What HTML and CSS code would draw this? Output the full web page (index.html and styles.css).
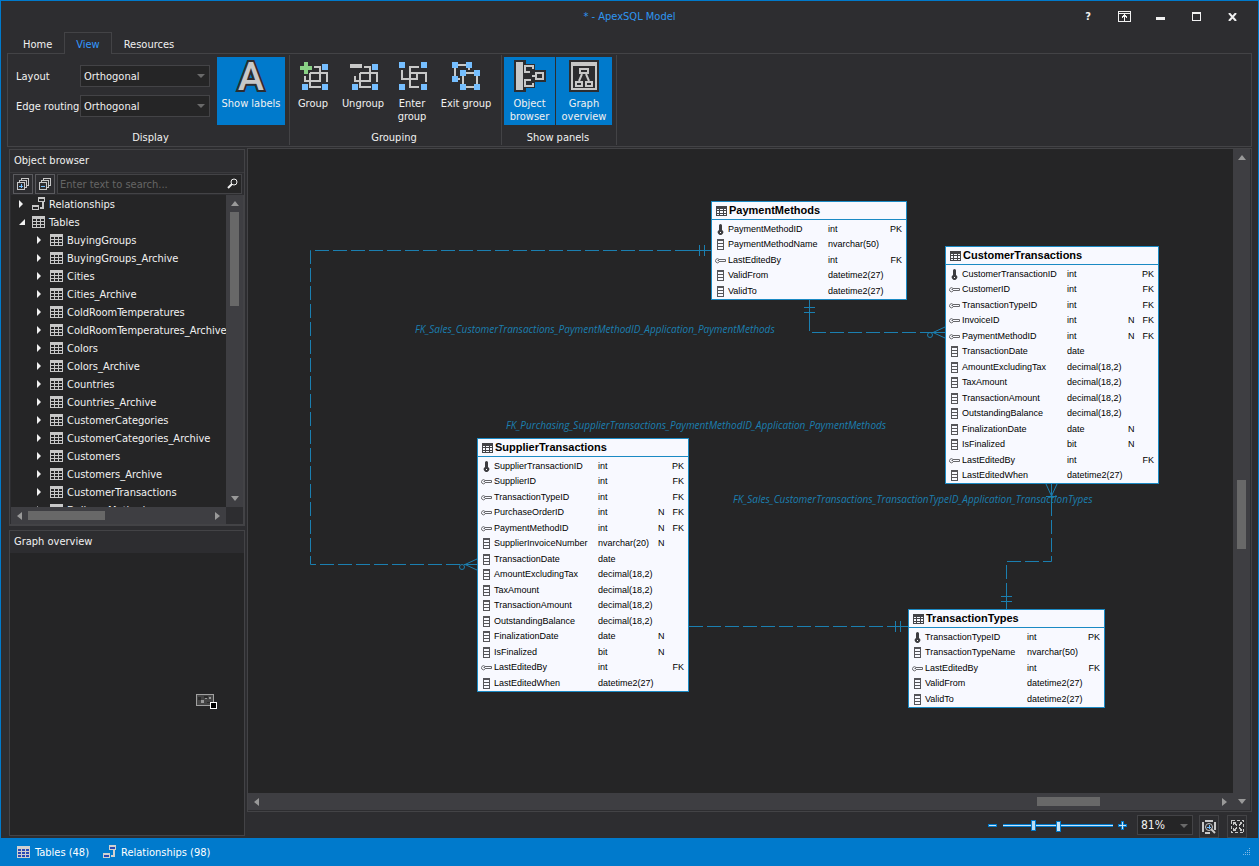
FILE: index.html
```
<!DOCTYPE html>
<html lang="en">
<head>
    <meta charset="UTF-8">
    <meta name="viewport" content="width=device-width, initial-scale=1.0">
    <title>* - ApexSQL Model</title>
    <link rel="stylesheet" href="styles.css">
</head>
<body>
    <!-- shared icons -->
    <svg class="sprite" aria-hidden="true">
        <symbol id="i-table" viewBox="0 0 13 12">
            <path fill="currentColor" fill-rule="evenodd" d="M0 0H13V12H0zM1 3V5H4V3zM5 3V5H8V3zM9 3V5H12V3zM1 6V8H4V6zM5 6V8H8V6zM9 6V8H12V6zM1 9V11H4V9zM5 9V11H8V9zM9 9V11H12V9z"/>
        </symbol>
        <symbol id="i-rel" viewBox="0 0 13 14">
            <path fill="currentColor" fill-rule="evenodd" d="M6 0H13V5H6zM7 2V4H12V2zM0 8H7V13H0zM1 10V12H6V10zM10 5H12V12H8V10H10z"/>
        </symbol>
        <symbol id="i-col" viewBox="0 0 11 11">
            <path fill="#55555a" fill-rule="evenodd" d="M2 0H9V11H2zM3 2V4H8V2zM3 5V7H8V5zM3 8V10H8V8z"/>
        </symbol>
        <symbol id="i-pk" viewBox="0 0 11 11">
            <path class="smooth" fill="#3c3c40" d="M4 1.500A1.500 1.500 0 0 1 7 1.500V6A2.700 2.700 0 1 1 4 6z"/>
            <path fill="#fff" d="M5 8H6V9H5z"/>
        </symbol>
        <symbol id="i-fk" viewBox="0 0 11 11">
            <path class="smooth" fill="none" stroke="#66666a" d="M4 4.500A2 2 0 1 0 4 7M2.500 5.500H4M4 4.500H10.500V6.500H4"/>
        </symbol>
    </svg>

    <div class="window">
        <header class="titlebar">
            <h1>* - ApexSQL Model</h1>
            <div class="window-buttons">
                <button aria-label="Help">?</button>
                <button aria-label="Hide ribbon"><svg width="13" height="11"><path fill="none" stroke="#f1f1f1" d="M.5 .5H12.5V10.5H.5zM0 2.5H13M6.5 4V10M4 6.5L6.5 4L9 6.5"/></svg></button>
                <button aria-label="Minimize"><svg width="9" height="11"><path fill="#f1f1f1" d="M0 6H9V9H0z"/></svg></button>
                <button aria-label="Maximize"><svg width="9" height="9"><path fill="#f1f1f1" fill-rule="evenodd" d="M0 0H9V9H0zM1 2V8H8V2z"/></svg></button>
                <button aria-label="Close"><svg class="smooth" width="9" height="8"><path fill="none" stroke="#f1f1f1" stroke-width="2" d="M1 0L8 8M8 0L1 8"/></svg></button>
            </div>
        </header>

        <nav class="tabs">
            <button>Home</button>
            <button class="active">View</button>
            <button>Resources</button>
        </nav>

        <div class="ribbon">
            <section class="group group-display">
                <div class="group-body">
                    <div class="fields">
                        <label for="layout">Layout</label>
                        <span class="combo"><select id="layout"><option>Orthogonal</option></select></span>
                        <label for="routing">Edge routing</label>
                        <span class="combo"><select id="routing"><option>Orthogonal</option></select></span>
                    </div>
                    <button class="tool pressed tool-labels">
                        <svg class="letter-icon" width="32" height="32"><text class="letter" x="16" y="30">A</text></svg>
                        Show labels
                    </button>
                </div>
                <h2>Display</h2>
            </section>

            <section class="group group-grouping">
                <div class="group-body">
                    <button class="tool w46">
                        <svg width="32" height="32">
                            <path class="line" d="M17 7H23V21H8V16M13 13H30V22M13 13V27H24"/>
                            <path class="blue" d="M25 4h6v6h-6zM5 24h6v6h-6zM25 24h6v6h-6z"/>
                            <path fill="#89d185" d="M7 2H11V6H15V10H11V14H7V10H3V6H7z"/>
                        </svg>
                        Group
                    </button>
                    <button class="tool w54">
                        <svg width="32" height="32">
                            <path class="line" d="M17 7H23V21H8V16M13 13H30V22M13 13V27H24"/>
                            <path class="blue" d="M25 4h6v6h-6zM5 24h6v6h-6zM25 24h6v6h-6z"/>
                            <path fill="#c8c8c8" d="M3 4H15V8H3z"/>
                        </svg>
                        Ungroup
                    </button>
                    <button class="tool w44">
                        <svg width="32" height="32">
                            <path class="line" d="M6 10V19H21V13M23 7H14V27H23M14 13H30V22"/>
                            <path class="blue" d="M3 2h6v6h-6zM25 2h6v6h-6zM3 24h6v6h-6zM25 24h6v6h-6z"/>
                        </svg>
                        Enter<br>group
                    </button>
                    <button class="tool w64">
                        <svg width="32" height="32">
                            <path class="line" d="M5 5H19V10M5 5V19H10M13 13H27V27H13z"/>
                            <path class="blue" d="M2 2h6v6h-6zM16 2h6v6h-6zM2 16h6v6h-6zM10 10h6v6h-6zM24 10h6v6h-6zM10 24h6v6h-6zM24 24h6v6h-6z"/>
                        </svg>
                        Exit group
                    </button>
                </div>
                <h2>Grouping</h2>
            </section>

            <section class="group group-panels">
                <div class="group-body">
                    <button class="tool pressed w51">
                        <svg width="32" height="32">
                            <path fill="#2d2d30" d="M0 0H12V4H21V10H32V22H21V28H12V32H0z"/>
                            <path fill="#c8c8c8" d="M2 2H9V30H2z"/>
                            <path class="line" d="M19 9V6H11V12H16M22 13H29V19H22zM22 16H18M19 23V26H11V20H17"/>
                        </svg>
                        Object browser
                    </button>
                    <button class="tool pressed w56">
                        <svg width="32" height="32">
                            <path fill="#2d2d30" d="M1 0H31V32H1z"/>
                            <path fill="#c8c8c8" fill-rule="evenodd" d="M3 2H29V30H3zM5 6V28H27V6z"/>
                            <path class="line smooth" d="M12 9H20V13H12zM8 22H14V26H8zM18 22H24V26H18zM14 14L11 21M18 14L21 21"/>
                        </svg>
                        Graph overview
                    </button>
                </div>
                <h2>Show panels</h2>
            </section>
        </div>

        <div class="workspace">
            <aside class="sidebar">
                <section class="panel browser">
                    <h2>Object browser</h2>
                    <div class="search-row">
                        <button aria-label="Expand all"><svg width="12" height="12"><path fill="none" stroke="#c8c8c8" d="M.5 4.5H7.5V11.5H.5zM2.5 4V2.5H9.5V9.5H8M4.5 2V.5H11.5V7.5H10"/><path stroke="#75beff" d="M2 8H6M4 6V10"/></svg></button>
                        <button aria-label="Collapse all"><svg width="12" height="12"><path fill="none" stroke="#c8c8c8" d="M.5 4.5H7.5V11.5H.5zM2.5 4V2.5H9.5V9.5H8M4.5 2V.5H11.5V7.5H10"/><path stroke="#75beff" d="M2 8H6"/></svg></button>
                        <div class="search">
                            <input type="text" aria-label="Search" placeholder="Enter text to search...">
                            <svg class="smooth" width="12" height="12"><circle cx="7" cy="4" r="3" fill="none" stroke="#f1f1f1"/><path stroke="#f1f1f1" stroke-width="2" d="M5 6L1 10"/></svg>
                        </div>
                    </div>
                    <div class="tree-area">
                        <ul class="tree">
                            <li><i class="closed"></i><svg class="rel"><use href="#i-rel"/></svg>Relationships</li>
                            <li><i class="open"></i><svg><use href="#i-table"/></svg>Tables</li>
                            <li class="sub"><i class="closed"></i><svg><use href="#i-table"/></svg>BuyingGroups</li>
                            <li class="sub"><i class="closed"></i><svg><use href="#i-table"/></svg>BuyingGroups_Archive</li>
                            <li class="sub"><i class="closed"></i><svg><use href="#i-table"/></svg>Cities</li>
                            <li class="sub"><i class="closed"></i><svg><use href="#i-table"/></svg>Cities_Archive</li>
                            <li class="sub"><i class="closed"></i><svg><use href="#i-table"/></svg>ColdRoomTemperatures</li>
                            <li class="sub"><i class="closed"></i><svg><use href="#i-table"/></svg>ColdRoomTemperatures_Archive</li>
                            <li class="sub"><i class="closed"></i><svg><use href="#i-table"/></svg>Colors</li>
                            <li class="sub"><i class="closed"></i><svg><use href="#i-table"/></svg>Colors_Archive</li>
                            <li class="sub"><i class="closed"></i><svg><use href="#i-table"/></svg>Countries</li>
                            <li class="sub"><i class="closed"></i><svg><use href="#i-table"/></svg>Countries_Archive</li>
                            <li class="sub"><i class="closed"></i><svg><use href="#i-table"/></svg>CustomerCategories</li>
                            <li class="sub"><i class="closed"></i><svg><use href="#i-table"/></svg>CustomerCategories_Archive</li>
                            <li class="sub"><i class="closed"></i><svg><use href="#i-table"/></svg>Customers</li>
                            <li class="sub"><i class="closed"></i><svg><use href="#i-table"/></svg>Customers_Archive</li>
                            <li class="sub"><i class="closed"></i><svg><use href="#i-table"/></svg>CustomerTransactions</li>
                            <li class="sub"><i class="closed"></i><svg><use href="#i-table"/></svg>DeliveryMethods</li>
                        </ul>
                        <div class="bar-v tree-v"><b class="up"></b><span></span><b class="down"></b></div>
                        <div class="bar-h tree-h"><b class="left"></b><span></span><b class="right"></b></div>
                    </div>
                </section>

                <section class="panel overview">
                    <h2>Graph overview</h2>
                    <div class="overview-map">
                        <svg class="mini" width="21" height="15">
                            <path fill="#444" stroke="#a0a0a0" d="M.5 .5H17.5V11.5H.5z"/>
                            <path fill="#2a2a2a" d="M2 3H5V6H2zM8 2H12V4H8zM11 8H15V9H11z"/>
                            <path fill="#999" d="M5 6H8V9H5zM13 3H15V5H13zM9 4H11V5H9z"/>
                            <path fill="#000" stroke="#fff" d="M14.5 8.5H20.5V14.5H14.5z"/>
                        </svg>
                    </div>
                </section>
            </aside>

            <main class="editor">
                <div class="diagram-box">
                    <div class="diagram">
                        <svg class="edges">
                            <g class="dashed">
                                <path d="M441 101.500H62.500V415.500H217"/>
                                <path d="M561.500 168V183.500H685"/>
                                <path d="M803.500 353V412.500H758.500V443"/>
                                <path d="M441 477.500H642"/>
                            </g>
                            <g>
                                <path d="M463 101.500H441M451.500 96V107M456.500 96V107"/>
                                <path d="M217 415.500H229M217 415.500L229 410M217 415.500L229 421"/>
                                <circle cx="214" cy="418" r="2.500"/>
                                <path d="M561.500 151V168M556 158.500H567M556 163.500H567"/>
                                <path d="M685 183.500H697M685 183.500L697 178M685 183.500L697 189"/>
                                <circle cx="682" cy="186" r="2.500"/>
                                <path d="M803.500 335V353M798 335L803.500 347L809 335M798 347.500H809"/>
                                <path d="M758.500 443V460M753 447.500H764M753 452.500H764"/>
                                <path d="M642 477.500H660M647.500 472V483M652.500 472V483"/>
                            </g>
                            <text x="167" y="184">FK_Sales_CustomerTransactions_PaymentMethodID_Application_PaymentMethods</text>
                            <text x="258" y="280">FK_Purchasing_SupplierTransactions_PaymentMethodID_Application_PaymentMethods</text>
                            <text x="485" y="354">FK_Sales_CustomerTransactions_TransactionTypeID_Application_TransactionTypes</text>
                        </svg>

                        <article class="node node-payment">
                            <h3><svg><use href="#i-table"/></svg>PaymentMethods</h3>
                            <table>
                                <tr><td><svg><use href="#i-pk"/></svg></td><td>PaymentMethodID</td><td>int</td><td></td><td>PK</td></tr>
                                <tr><td><svg><use href="#i-col"/></svg></td><td>PaymentMethodName</td><td>nvarchar(50)</td><td></td><td></td></tr>
                                <tr><td><svg><use href="#i-fk"/></svg></td><td>LastEditedBy</td><td>int</td><td></td><td>FK</td></tr>
                                <tr><td><svg><use href="#i-col"/></svg></td><td>ValidFrom</td><td>datetime2(27)</td><td></td><td></td></tr>
                                <tr><td><svg><use href="#i-col"/></svg></td><td>ValidTo</td><td>datetime2(27)</td><td></td><td></td></tr>
                            </table>
                        </article>

                        <article class="node node-customer">
                            <h3><svg><use href="#i-table"/></svg>CustomerTransactions</h3>
                            <table>
                                <tr><td><svg><use href="#i-pk"/></svg></td><td>CustomerTransactionID</td><td>int</td><td></td><td>PK</td></tr>
                                <tr><td><svg><use href="#i-fk"/></svg></td><td>CustomerID</td><td>int</td><td></td><td>FK</td></tr>
                                <tr><td><svg><use href="#i-fk"/></svg></td><td>TransactionTypeID</td><td>int</td><td></td><td>FK</td></tr>
                                <tr><td><svg><use href="#i-fk"/></svg></td><td>InvoiceID</td><td>int</td><td>N</td><td>FK</td></tr>
                                <tr><td><svg><use href="#i-fk"/></svg></td><td>PaymentMethodID</td><td>int</td><td>N</td><td>FK</td></tr>
                                <tr><td><svg><use href="#i-col"/></svg></td><td>TransactionDate</td><td>date</td><td></td><td></td></tr>
                                <tr><td><svg><use href="#i-col"/></svg></td><td>AmountExcludingTax</td><td>decimal(18,2)</td><td></td><td></td></tr>
                                <tr><td><svg><use href="#i-col"/></svg></td><td>TaxAmount</td><td>decimal(18,2)</td><td></td><td></td></tr>
                                <tr><td><svg><use href="#i-col"/></svg></td><td>TransactionAmount</td><td>decimal(18,2)</td><td></td><td></td></tr>
                                <tr><td><svg><use href="#i-col"/></svg></td><td>OutstandingBalance</td><td>decimal(18,2)</td><td></td><td></td></tr>
                                <tr><td><svg><use href="#i-col"/></svg></td><td>FinalizationDate</td><td>date</td><td>N</td><td></td></tr>
                                <tr><td><svg><use href="#i-col"/></svg></td><td>IsFinalized</td><td>bit</td><td>N</td><td></td></tr>
                                <tr><td><svg><use href="#i-fk"/></svg></td><td>LastEditedBy</td><td>int</td><td></td><td>FK</td></tr>
                                <tr><td><svg><use href="#i-col"/></svg></td><td>LastEditedWhen</td><td>datetime2(27)</td><td></td><td></td></tr>
                            </table>
                        </article>

                        <article class="node node-supplier">
                            <h3><svg><use href="#i-table"/></svg>SupplierTransactions</h3>
                            <table>
                                <tr><td><svg><use href="#i-pk"/></svg></td><td>SupplierTransactionID</td><td>int</td><td></td><td>PK</td></tr>
                                <tr><td><svg><use href="#i-fk"/></svg></td><td>SupplierID</td><td>int</td><td></td><td>FK</td></tr>
                                <tr><td><svg><use href="#i-fk"/></svg></td><td>TransactionTypeID</td><td>int</td><td></td><td>FK</td></tr>
                                <tr><td><svg><use href="#i-fk"/></svg></td><td>PurchaseOrderID</td><td>int</td><td>N</td><td>FK</td></tr>
                                <tr><td><svg><use href="#i-fk"/></svg></td><td>PaymentMethodID</td><td>int</td><td>N</td><td>FK</td></tr>
                                <tr><td><svg><use href="#i-col"/></svg></td><td>SupplierInvoiceNumber</td><td>nvarchar(20)</td><td>N</td><td></td></tr>
                                <tr><td><svg><use href="#i-col"/></svg></td><td>TransactionDate</td><td>date</td><td></td><td></td></tr>
                                <tr><td><svg><use href="#i-col"/></svg></td><td>AmountExcludingTax</td><td>decimal(18,2)</td><td></td><td></td></tr>
                                <tr><td><svg><use href="#i-col"/></svg></td><td>TaxAmount</td><td>decimal(18,2)</td><td></td><td></td></tr>
                                <tr><td><svg><use href="#i-col"/></svg></td><td>TransactionAmount</td><td>decimal(18,2)</td><td></td><td></td></tr>
                                <tr><td><svg><use href="#i-col"/></svg></td><td>OutstandingBalance</td><td>decimal(18,2)</td><td></td><td></td></tr>
                                <tr><td><svg><use href="#i-col"/></svg></td><td>FinalizationDate</td><td>date</td><td>N</td><td></td></tr>
                                <tr><td><svg><use href="#i-col"/></svg></td><td>IsFinalized</td><td>bit</td><td>N</td><td></td></tr>
                                <tr><td><svg><use href="#i-fk"/></svg></td><td>LastEditedBy</td><td>int</td><td></td><td>FK</td></tr>
                                <tr><td><svg><use href="#i-col"/></svg></td><td>LastEditedWhen</td><td>datetime2(27)</td><td></td><td></td></tr>
                            </table>
                        </article>

                        <article class="node node-types">
                            <h3><svg><use href="#i-table"/></svg>TransactionTypes</h3>
                            <table>
                                <tr><td><svg><use href="#i-pk"/></svg></td><td>TransactionTypeID</td><td>int</td><td></td><td>PK</td></tr>
                                <tr><td><svg><use href="#i-col"/></svg></td><td>TransactionTypeName</td><td>nvarchar(50)</td><td></td><td></td></tr>
                                <tr><td><svg><use href="#i-fk"/></svg></td><td>LastEditedBy</td><td>int</td><td></td><td>FK</td></tr>
                                <tr><td><svg><use href="#i-col"/></svg></td><td>ValidFrom</td><td>datetime2(27)</td><td></td><td></td></tr>
                                <tr><td><svg><use href="#i-col"/></svg></td><td>ValidTo</td><td>datetime2(27)</td><td></td><td></td></tr>
                            </table>
                        </article>
                    </div>
                    <div class="bar-v diagram-v"><b class="up"></b><span></span><b class="down"></b></div>
                    <div class="bar-h diagram-h"><b class="left"></b><span></span><b class="right"></b></div>
                </div>

                <div class="zoom-row">
                    <button class="step" aria-label="Zoom out"><svg width="9" height="9"><path fill="#007acc" d="M0 3H9V6H0z"/><path fill="#c8e4f8" d="M1 4H8V5H1z"/></svg></button>
                    <div class="slider"><input type="range" aria-label="Zoom" min="0" max="100" value="27"></div>
                    <button class="step" aria-label="Zoom in"><svg width="9" height="9"><path fill="#007acc" d="M3 0H6V3H9V6H6V9H3V6H0V3H3z"/><path fill="#c8e4f8" d="M4 1H5V4H8V5H5V8H4V5H1V4H4z"/></svg></button>
                    <span class="combo zoom-combo"><select aria-label="Zoom level"><option>81%</option></select></span>
                    <button class="square" aria-label="Zoom to selection"><svg width="14" height="14"><path fill="none" stroke="#c8c8c8" stroke-width="2" d="M1 2V12M3 1H11M13 2V10M3 13H8"/><circle class="smooth" cx="7" cy="7" r="3.500" fill="#2d2d30" stroke="#c8c8c8"/><path stroke="#75beff" d="M5 7.500H9M7.500 5V9"/><path class="smooth" stroke="#c8c8c8" stroke-width="2" d="M9 9L13 13"/></svg></button>
                    <button class="square" aria-label="Fit content"><svg width="13" height="13"><path fill="none" stroke="#c8c8c8" stroke-dasharray="3 2" d="M.5 .5H12.500V12.500H.5z"/><path fill="#c8c8c8" d="M2 2H5L4 3L6 5L5 6L3 4L2 5zM11 2V5L10 4L8 6L7 5L9 3L8 2zM2 11V8L3 9L5 7L6 8L4 10L5 11zM11 11H8L9 10L7 8L8 7L10 9L11 8z"/></svg></button>
                </div>
            </main>
        </div>

        <footer class="statusbar">
            <span class="stat"><svg width="13" height="12"><path fill="#2a4bb5" d="M1 3H12V11H1z"/><use href="#i-table"/></svg>Tables (48)</span>
            <span class="stat"><svg width="13" height="14"><path fill="#2a4bb5" d="M7 2H12V4H7zM1 10H6V12H1z"/><use href="#i-rel"/></svg>Relationships (98)</span>
            <svg class="grip" width="8" height="8"><path fill="#7fb8e6" d="M6 0h1v1h-1zM4 2h1v1h-1zM6 2h1v1h-1zM2 4h1v1h-1zM4 4h1v1h-1zM6 4h1v1h-1zM0 6h1v1h-1zM2 6h1v1h-1zM4 6h1v1h-1zM6 6h1v1h-1z"/></svg>
        </footer>
    </div>
</body>
</html>
```

FILE: styles.css
```
* {
    box-sizing: border-box;
}

body {
    margin: 0;
    background: #2d2d30;
    color: #f1f1f1;
    font-family: Tahoma, 'DejaVu Sans Condensed', 'Noto Sans', sans-serif;
    font-size: 11px;
    line-height: 13px;
}

h1, h2, h3, ul {
    margin: 0;
    padding: 0;
    font-size: 11px;
    font-weight: normal;
}

button, select, input {
    margin: 0;
    padding: 0;
    border: none;
    border-radius: 0;
    background: none;
    color: inherit;
    font: inherit;
}

svg {
    display: block;
    flex: none;
    shape-rendering: crispEdges;
}

.smooth {
    shape-rendering: auto;
}

.sprite {
    display: none;
}

.window {
    display: flex;
    flex-direction: column;
    height: 100vh;
    border: 1px solid #007acc;
    border-bottom: none;
}

/* title bar */
.titlebar {
    display: grid;
    grid-template-columns: 1fr auto 1fr;
    align-items: center;
    height: 31px;
    padding: 0 8px;
}

.titlebar h1 {
    grid-column: 2;
    color: #2f96f0;
}

.window-buttons {
    display: flex;
    justify-content: flex-end;
}

.window-buttons button {
    display: flex;
    justify-content: center;
    align-items: center;
    width: 36px;
    height: 24px;
    font-weight: bold;
}

/* ribbon */
.tabs {
    display: flex;
    height: 22px;
    padding-left: 10px;
    margin-bottom: -1px;
    position: relative;
    z-index: 1;
}

.tabs button {
    padding: 2px 11px 0;
    border: 1px solid transparent;
    border-bottom: none;
}

.tabs .active {
    color: #3399ff;
    border-color: #434346;
    background: #2d2d30;
}

.ribbon {
    display: flex;
    height: 94px;
    margin: 0 6px;
    border: 1px solid #434346;
}

.group {
    display: flex;
    flex-direction: column;
    margin: 1px 0;
    padding: 2px 3px 0 0;
    border-right: 1px solid #434346;
}

.group-body {
    display: flex;
    height: 68px;
}

.group h2 {
    padding-top: 6px;
    text-align: center;
}

.group-display {
    padding: 2px 4px 0 8px;
}

.group-panels {
    padding: 2px 4px 0 2px;
}

.group-panels .group-body {
    gap: 1px;
}

.fields {
    display: grid;
    grid-template-columns: 64px 130px;
    grid-auto-rows: 22px;
    row-gap: 8px;
    align-items: center;
    padding-top: 8px;
    margin-right: 7px;
    white-space: nowrap;
}

.combo {
    display: block;
    position: relative;
    height: 22px;
    border: 1px solid #434346;
    background: #252526;
}

.combo select {
    width: 100%;
    height: 100%;
    padding: 0 3px;
    appearance: none;
    outline: none;
}

.combo::after {
    content: '';
    position: absolute;
    right: 4px;
    top: 8px;
    border: 4px solid transparent;
    border-top-color: #6a6a6a;
    border-bottom: none;
    pointer-events: none;
}

.tool {
    display: flex;
    flex-direction: column;
    align-items: center;
    gap: 5px;
    padding-top: 3px;
    text-align: center;
}

.pressed {
    background: #007acc;
}

.tool-labels { width: 68px; }
.w44 { width: 44px; }
.w46 { width: 46px; }
.w51 { width: 51px; }
.w54 { width: 54px; }
.w56 { width: 56px; }
.w64 { width: 64px; }

.letter-icon {
    overflow: visible;
}

.letter {
    font: 500 39px Roboto, sans-serif;
    text-anchor: middle;
    fill: #c8c8c8;
    stroke: #2d2d30;
    stroke-width: 4px;
    paint-order: stroke;
}

.line {
    fill: none;
    stroke: #c8c8c8;
    stroke-width: 2;
}

.blue {
    fill: #75beff;
}

/* workspace */
.workspace {
    display: flex;
    flex: 1;
    min-height: 0;
    gap: 2px;
    padding: 1px 6px 0 8px;
}

.sidebar {
    display: flex;
    flex-direction: column;
    gap: 4px;
    width: 236px;
    padding: 1px 0 2px;
}

.panel {
    display: flex;
    flex-direction: column;
    border: 1px solid #434346;
}

.panel h2 {
    padding: 4px 4px 5px;
}

.browser {
    height: 377px;
}

.overview {
    flex: 1;
}

.overview-map {
    position: relative;
    flex: 1;
    background: #252526;
}

.mini {
    position: absolute;
    left: 186px;
    top: 141px;
}

.search-row {
    display: flex;
    gap: 2px;
    padding: 1px 2px 1px 3px;
    border-top: 1px solid #3a3a3d;
    height: 23px;
}

.search-row button {
    display: flex;
    justify-content: center;
    align-items: center;
    width: 20px;
    border: 1px solid #5a5a5e;
}

.search {
    display: flex;
    flex: 1;
    align-items: center;
    padding-right: 2px;
    border: 1px solid #434346;
    background: #252526;
}

.search input {
    flex: 1;
    min-width: 0;
    padding-left: 2px;
    outline: none;
}

.search input::placeholder {
    color: #656565;
}

.tree-area {
    display: grid;
    grid-template: 1fr 17px / 1fr 17px;
    flex: 1;
    min-height: 0;
    padding-left: 1px;
    border: solid #434346;
    border-width: 0 1px 1px 0;
}

.tree {
    min-height: 0;
    overflow: hidden;
    background: #252526;
    list-style: none;
}

.tree li {
    display: flex;
    align-items: center;
    height: 18px;
    padding-left: 8px;
    white-space: nowrap;
}

.tree .sub {
    padding-left: 26px;
}

.tree svg {
    width: 13px;
    height: 12px;
    margin-right: 4px;
    color: #c8c8c8;
}

.tree .rel {
    height: 14px;
}

.tree i {
    width: 5px;
    margin-right: 8px;
    flex: none;
}

.closed {
    border: 4px solid transparent;
    border-left: 4px solid #f1f1f1;
    border-right: none;
}

.tree .open {
    width: 6px;
    margin-right: 7px;
    border: 3px solid transparent;
    border-right-color: #f1f1f1;
    border-bottom-color: #f1f1f1;
}

/* scrollbars */
.bar-v, .bar-h {
    display: flex;
    align-items: center;
    background: #3e3e42;
}

.bar-v {
    flex-direction: column;
}

.bar-v span, .bar-h span {
    background: #686868;
}

.bar-v span { width: 9px; }
.bar-h span { height: 9px; }

.bar-v b, .bar-h b {
    flex: none;
    border: 4px solid transparent;
}

.up {
    margin: 6px 0;
    border-top: none !important;
    border-bottom: 5px solid #999 !important;
}

.down {
    margin: auto 0 6px;
    border-bottom: none !important;
    border-top: 5px solid #999 !important;
}

.left {
    margin: 0 6px;
    border-left: none !important;
    border-right: 5px solid #999 !important;
}

.right {
    margin: 0 6px 0 auto;
    border-right: none !important;
    border-left: 5px solid #999 !important;
}

.tree-v span { height: 94px; }
.tree-h span { width: 77px; }

.diagram-v span {
    height: 69px;
    margin-top: 314px;
}

.diagram-h span {
    width: 63px;
    margin-left: 772px;
}

/* diagram */
.editor {
    display: flex;
    flex-direction: column;
    flex: 1;
    min-width: 0;
}

.diagram-box {
    display: grid;
    grid-template: 1fr 17px / 1fr 17px;
    flex: 1;
    min-height: 0;
    padding: 0 1px 1px 0;
    border: 1px solid #434346;
}

.diagram {
    position: relative;
    overflow: hidden;
    background: #252526;
}

.diagram-v {
    grid-row: span 2;
}

.edges {
    position: absolute;
    width: 100%;
    height: 100%;
    fill: none;
    stroke: #1b7fb0;
    shape-rendering: auto;
}

.dashed {
    stroke-dasharray: 14 4;
}

.edges text {
    fill: #1b7fb0;
    stroke: none;
    font: italic 10px 'Open Sans', sans-serif;
}

.node {
    position: absolute;
    border: 1px solid #1b8ac4;
    background: #f8f9ff;
    color: #000;
    font-family: 'Liberation Sans', Arial, sans-serif;
    font-size: 9px;
    line-height: 11px;
}

.node-payment { left: 463px; top: 52px; width: 196px; --name: 100px; }
.node-customer { left: 697px; top: 97px; width: 214px; --name: 105px; }
.node-supplier { left: 229px; top: 289px; width: 212px; --name: 104px; }
.node-types { left: 660px; top: 460px; width: 197px; --name: 102px; }

.node h3 {
    display: flex;
    align-items: center;
    gap: 2px;
    height: 18px;
    padding-left: 4px;
    border-bottom: 1px solid #1b8ac4;
    font-weight: bold;
}

.node h3 svg {
    width: 11px;
    height: 10px;
    color: #444448;
}

.node table {
    width: 100%;
    margin-top: 1px;
    table-layout: fixed;
    border-collapse: collapse;
}

.node tr { height: 16px; }
.node tr:nth-child(even) { height: 15px; }

.node td {
    padding: 0;
    white-space: nowrap;
}

.node td:nth-child(1) { width: 16px; padding-left: 3px; }
.node td:nth-child(2) { width: var(--name); }
.node td:nth-child(4) { width: 12px; }
.node td:nth-child(5) { width: 18px; padding-right: 4px; text-align: right; }

.node td svg {
    width: 11px;
    height: 11px;
}

/* zoom controls */
.zoom-row {
    display: flex;
    justify-content: flex-end;
    align-items: flex-start;
    height: 26px;
    padding: 3px 5px 0 0;
}

.step {
    height: 20px;
}

.slider {
    position: relative;
    width: 110px;
    height: 20px;
    margin: 0 5px 0 6px;
}

.slider::after {
    content: '';
    position: absolute;
    left: 53px;
    top: 6px;
    width: 3px;
    height: 9px;
    border: 1px solid #007acc;
    background: #c8e4f8;
}

.slider input {
    display: block;
    width: 110px;
    height: 20px;
    appearance: none;
}

.slider input::-webkit-slider-runnable-track {
    height: 3px;
    border: solid #007acc;
    border-width: 1px 0;
    background: #c8e4f8;
}

.slider input::-webkit-slider-thumb {
    appearance: none;
    width: 5px;
    height: 11px;
    margin-top: -5px;
    border: 1px solid #007acc;
    background: #b8dcf5;
}

.zoom-combo {
    width: 56px;
    height: 20px;
    margin: 0 6px 0 10px;
    font-size: 12px;
}

.square {
    display: flex;
    justify-content: center;
    align-items: center;
    width: 20px;
    height: 23px;
    border: 1px solid #434346;
}

.square + .square {
    margin-left: 8px;
}

/* status bar */
.statusbar {
    display: flex;
    align-items: center;
    gap: 14px;
    height: 28px;
    padding: 0 7px 0 16px;
    background: #007acc;
}

.stat {
    display: flex;
    align-items: center;
    gap: 5px;
    color: #fff;
}

.stat svg {
    color: #d0d0d0;
}

.grip {
    margin-left: auto;
}
```
